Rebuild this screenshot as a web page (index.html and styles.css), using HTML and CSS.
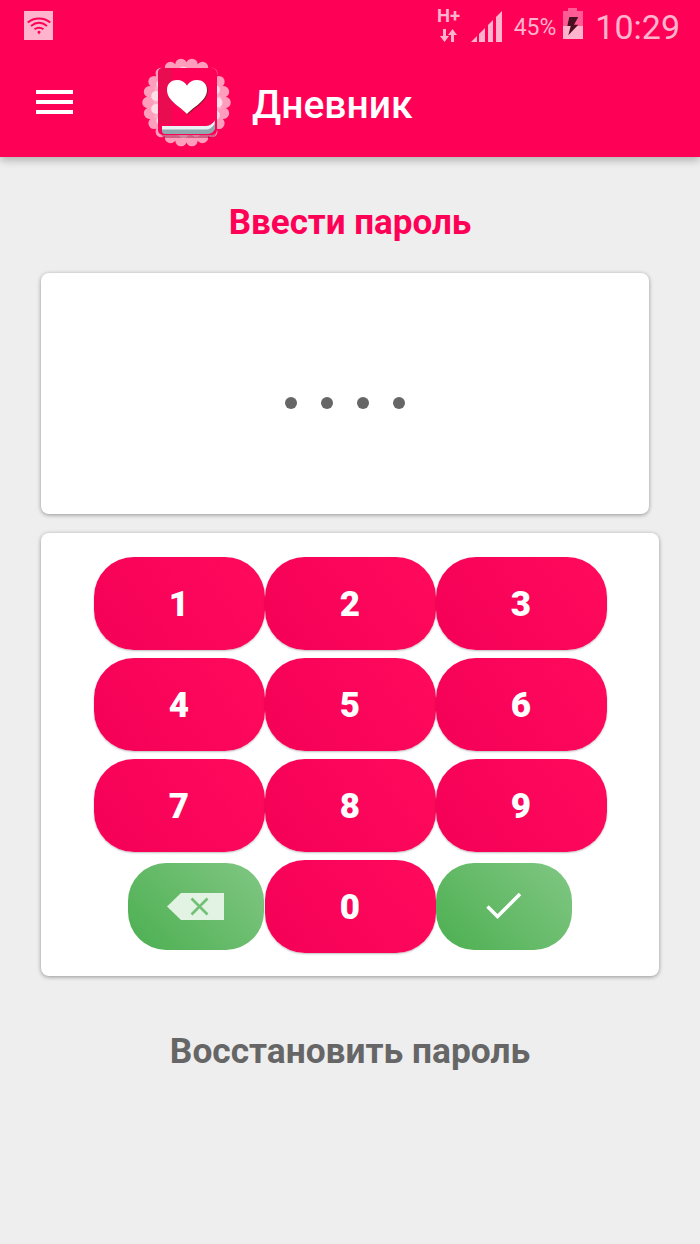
FILE: index.html
```html
<!DOCTYPE html>
<html lang="ru">
<head>
    <meta charset="UTF-8">
    <meta name="viewport" content="width=device-width, initial-scale=1.0">
    <title>Дневник</title>
    <link rel="stylesheet" href="styles.css">
</head>
<body>
    <header class="header">
        <div class="status-bar">
            <div class="notif-box">
                <svg width="24" height="18" viewBox="0 0 24 18" fill="none" stroke="#ff0057" stroke-width="2">
                    <path d="M0.7 5.5C7 0 17 0 23.3 5.5"/>
                    <path d="M4 9C9 5 15 5 20 9"/>
                    <path d="M7.5 12.3C10.3 10.3 13.7 10.3 16.5 12.3"/>
                    <path d="M10.2 15L12 17.4L13.8 15L12 13.6Z" fill="#ff0057" stroke="none"/>
                </svg>
            </div>
            <div class="status-right">
                <div class="net">
                    <span class="net-label">H+</span>
                    <svg width="17" height="13" viewBox="0 0 17 13" fill="#ffb3cc">
                        <path d="M3 0H6V7H9L4.5 13L0 7H3Z"/>
                        <path d="M11 13H14V6H17L12.5 0L8 6H11Z"/>
                    </svg>
                </div>
                <svg class="signal" width="31" height="32" viewBox="0 0 31 32" fill="#ffb3cc">
                    <path d="M0 32L6 26V32Z"/>
                    <path d="M8 24L14 18V32H8Z"/>
                    <path d="M17 15L22 10V32H17Z"/>
                    <path d="M25 7L31 1V32H25Z"/>
                </svg>
                <span class="percent">45%</span>
                <svg class="battery" width="20" height="31" viewBox="0 0 20 31">
                    <path d="M5 0H14V3H20V31H0V3H5Z" fill="#ff5c96"/>
                    <path d="M0 18H20V31H0Z" fill="#ffb3cc"/>
                    <path d="M6.3 9H15.3L11 16.7H15.3L5.3 27.3L7.7 18H4.3Z" fill="#4a1020"/>
                </svg>
                <span class="clock">10:29</span>
            </div>
        </div>
        <div class="app-bar">
            <div class="menu-icon">
                <span></span>
                <span></span>
                <span></span>
            </div>
            <svg class="logo" width="94" height="92" viewBox="0 0 94 92">
                <circle cx="46.5" cy="44.5" r="38" fill="#ffb0ca"/>
                <circle cx="46.5" cy="44.5" r="38.5" fill="none" stroke="#ff9dbd" stroke-width="11.5" stroke-linecap="round" pathLength="22" stroke-dasharray="0 1"/>
                <circle cx="46.5" cy="44.5" r="31" fill="none" stroke="#ffdfe9" stroke-width="10" stroke-linecap="round" pathLength="15" stroke-dasharray="0 1"/>
                <rect x="21" y="14" width="55" height="66" rx="5" fill="#8c0032" opacity="0.4"/>
                <rect x="18" y="10" width="59" height="67" rx="5" fill="#ff0057"/>
                <path d="M23 10H32V66H18V15Q18 10 23 10Z" fill="#e90c50"/>
                <path d="M22 68H66Q72 68 75 62V71Q73 76 67 76H25Q22 76 22 73Z" fill="#8fa9ae"/>
                <path d="M22 68H66Q71 68 74.5 63V66Q71 71.5 66 71.5H22Z" fill="#e8f2f3"/>
                <path d="M47 56C41 49 27 43 27 32C27 25 32 22 37 22C41.5 22 45 24 47 27.5C49 24 52.5 22 57 22C62 22 67 25 67 32C67 43 53 49 47 56Z" fill="#7a1a20" transform="translate(0.8 0.8)"/>
                <path d="M47 56C41 49 27 43 27 32C27 25 32 22 37 22C41.5 22 45 24 47 27.5C49 24 52.5 22 57 22C62 22 67 25 67 32C67 43 53 49 47 56Z" fill="#fff"/>
            </svg>
            <h1 class="app-title">Дневник</h1>
        </div>
    </header>

    <main class="content">
        <h2 class="page-title">Ввести пароль</h2>

        <div class="card pin-card">
            <span class="dot"></span>
            <span class="dot"></span>
            <span class="dot"></span>
            <span class="dot"></span>
        </div>

        <div class="card keypad">
            <div class="key-row">
                <button class="key">1</button>
                <button class="key">2</button>
                <button class="key">3</button>
            </div>
            <div class="key-row">
                <button class="key">4</button>
                <button class="key">5</button>
                <button class="key">6</button>
            </div>
            <div class="key-row">
                <button class="key">7</button>
                <button class="key">8</button>
                <button class="key">9</button>
            </div>
            <div class="key-row">
                <button class="key-green key-left" aria-label="Стереть">
                    <svg width="57" height="27" viewBox="0 0 57 27">
                        <path d="M14 0H57V27H14L0 13.5Z" fill="#e2f2e3"/>
                        <path d="M24.5 5.5L40.5 21.5M40.5 5.5L24.5 21.5" stroke="#70c175" stroke-width="2.6" fill="none"/>
                    </svg>
                </button>
                <button class="key">0</button>
                <button class="key-green key-right" aria-label="Готово">
                    <svg width="36" height="28" viewBox="0 0 36 28">
                        <path d="M1.5 14.5L11.5 24.5L34 2" stroke="#fff" stroke-width="3.5" fill="none"/>
                    </svg>
                </button>
            </div>
        </div>

        <a class="restore">Восстановить пароль</a>
    </main>
</body>
</html>
```

FILE: styles.css
```css
* {
    box-sizing: border-box;
}
body {
    margin: 0;
    height: 100vh;
    overflow: hidden;
    font-family: Roboto, sans-serif;
    background-color: #eeeeee;
}
.header {
    height: 157px;
    background-color: #ff0057;
    box-shadow: 0 3px 8px rgba(0, 0, 0, 0.28);
}
.status-bar {
    height: 54px;
    padding: 8px 20px 0 24px;
    display: flex;
    justify-content: space-between;
    align-items: flex-start;
    color: #ffb3cc;
}
.notif-box {
    width: 29px;
    height: 29px;
    margin-top: 3px;
    background-color: #ffb3cc;
    display: flex;
    align-items: center;
    justify-content: center;
}
.status-right {
    display: flex;
    align-items: center;
}
.net {
    width: 24px;
    margin-bottom: 3px;
    display: flex;
    flex-direction: column;
    align-items: center;
    gap: 5px;
}
.net-label {
    font-size: 18.5px;
    line-height: 15px;
    font-weight: 700;
}
.signal {
    margin-left: 10px;
    margin-bottom: 3px;
}
.percent {
    margin-left: 12px;
    font-size: 23px;
}
.battery {
    margin-left: 7px;
    margin-bottom: 7px;
}
.clock {
    margin-left: 12px;
    font-size: 34px;
    line-height: 38px;
}
.app-bar {
    height: 103px;
    padding-left: 36px;
    display: flex;
    align-items: center;
}
.menu-icon {
    width: 37px;
    display: flex;
    flex-direction: column;
    gap: 5.5px;
    margin-top: -7px;
}
.menu-icon span {
    display: block;
    height: 4.5px;
    background-color: #fff;
}
.logo {
    margin-left: 67px;
    margin-top: -4px;
}
.app-title {
    margin: -2px 0 0 18px;
    font-size: 39px;
    font-weight: 500;
    color: #fff;
}
.content {
    display: flex;
    flex-direction: column;
    align-items: flex-start;
}
.page-title {
    width: 100%;
    margin: 0;
    padding-top: 46px;
    height: 116px;
    line-height: 40px;
    text-align: center;
    font-size: 35px;
    font-weight: 700;
    color: #ff0057;
}
.card {
    margin-left: 41px;
    background-color: #fff;
    border-radius: 8px;
    box-shadow: 0 1px 4px rgba(0, 0, 0, 0.38);
}
.pin-card {
    width: 608px;
    height: 241px;
    display: flex;
    align-items: center;
    justify-content: center;
    gap: 24px;
    padding-top: 19px;
}
.dot {
    width: 12px;
    height: 12px;
    border-radius: 50%;
    background-color: #666;
}
.keypad {
    width: 618px;
    margin-top: 19px;
    padding: 24px 0 23px;
    display: flex;
    flex-direction: column;
    gap: 8px;
}
.key-row {
    display: flex;
    justify-content: center;
    align-items: center;
}
.key,
.key-green {
    border: none;
    padding: 0;
    font-family: Roboto, sans-serif;
    color: #fff;
    display: flex;
    align-items: center;
    justify-content: center;
}
.key {
    width: 171px;
    height: 93px;
    padding-top: 2px;
    border-radius: 40px;
    font-size: 35px;
    font-weight: 900;
    background: linear-gradient(55deg, #f40057, #ff0a5c);
    box-shadow: 0 1px 2px rgba(0, 0, 0, 0.25);
}
.key-green {
    width: 136px;
    height: 87px;
    margin-top: -1px;
    border-radius: 38px;
    background: linear-gradient(45deg, #4caf50, #81c784);
}
.key-left {
    margin-left: -36px;
    margin-right: 1px;
}
.key-right {
    margin-right: -35px;
}
.restore {
    width: 100%;
    margin-top: 54px;
    text-align: center;
    font-size: 35.3px;
    line-height: 42px;
    font-weight: 700;
    color: #666;
}
```
